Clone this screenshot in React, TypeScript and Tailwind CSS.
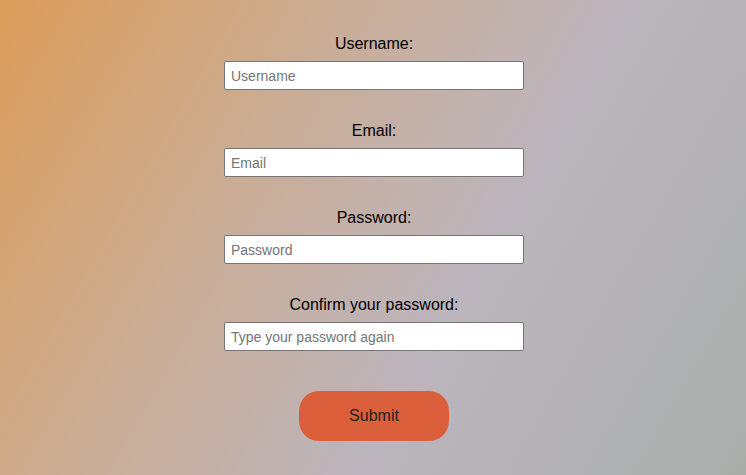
export default function App() {
  const fields = [
    { label: "Username:", placeholder: "Username", type: "text" },
    { label: "Email:", placeholder: "Email", type: "email" },
    { label: "Password:", placeholder: "Password", type: "password" },
    {
      label: "Confirm your password:",
      placeholder: "Type your password again",
      type: "password",
    },
  ];

  return (
    <div className="min-h-screen w-full bg-[linear-gradient(120deg,#dc9d5a_0%,#c9ad97_35%,#bcb5bd_62%,#a9aeab_100%)] font-['Liberation_Sans',Arial,sans-serif] text-black">
      <form className="flex flex-col items-center pl-[2px] pt-[34px]">
        {fields.map((f) => (
          <div key={f.label} className="mb-[31px] flex flex-col items-center">
            <label className="mb-[8px] text-base leading-[19px]">{f.label}</label>
            <input
              type={f.type}
              placeholder={f.placeholder}
              className="h-[29px] w-[300px] rounded-[2px] border border-[#767676] bg-white px-[6px] text-sm placeholder:text-[#757575]"
            />
          </div>
        ))}
        <button
          type="button"
          className="mt-[9px] h-[50px] w-[150px] rounded-[20px] bg-[#db5f3a] text-base text-[#222]"
        >
          Submit
        </button>
      </form>
    </div>
  );
}
